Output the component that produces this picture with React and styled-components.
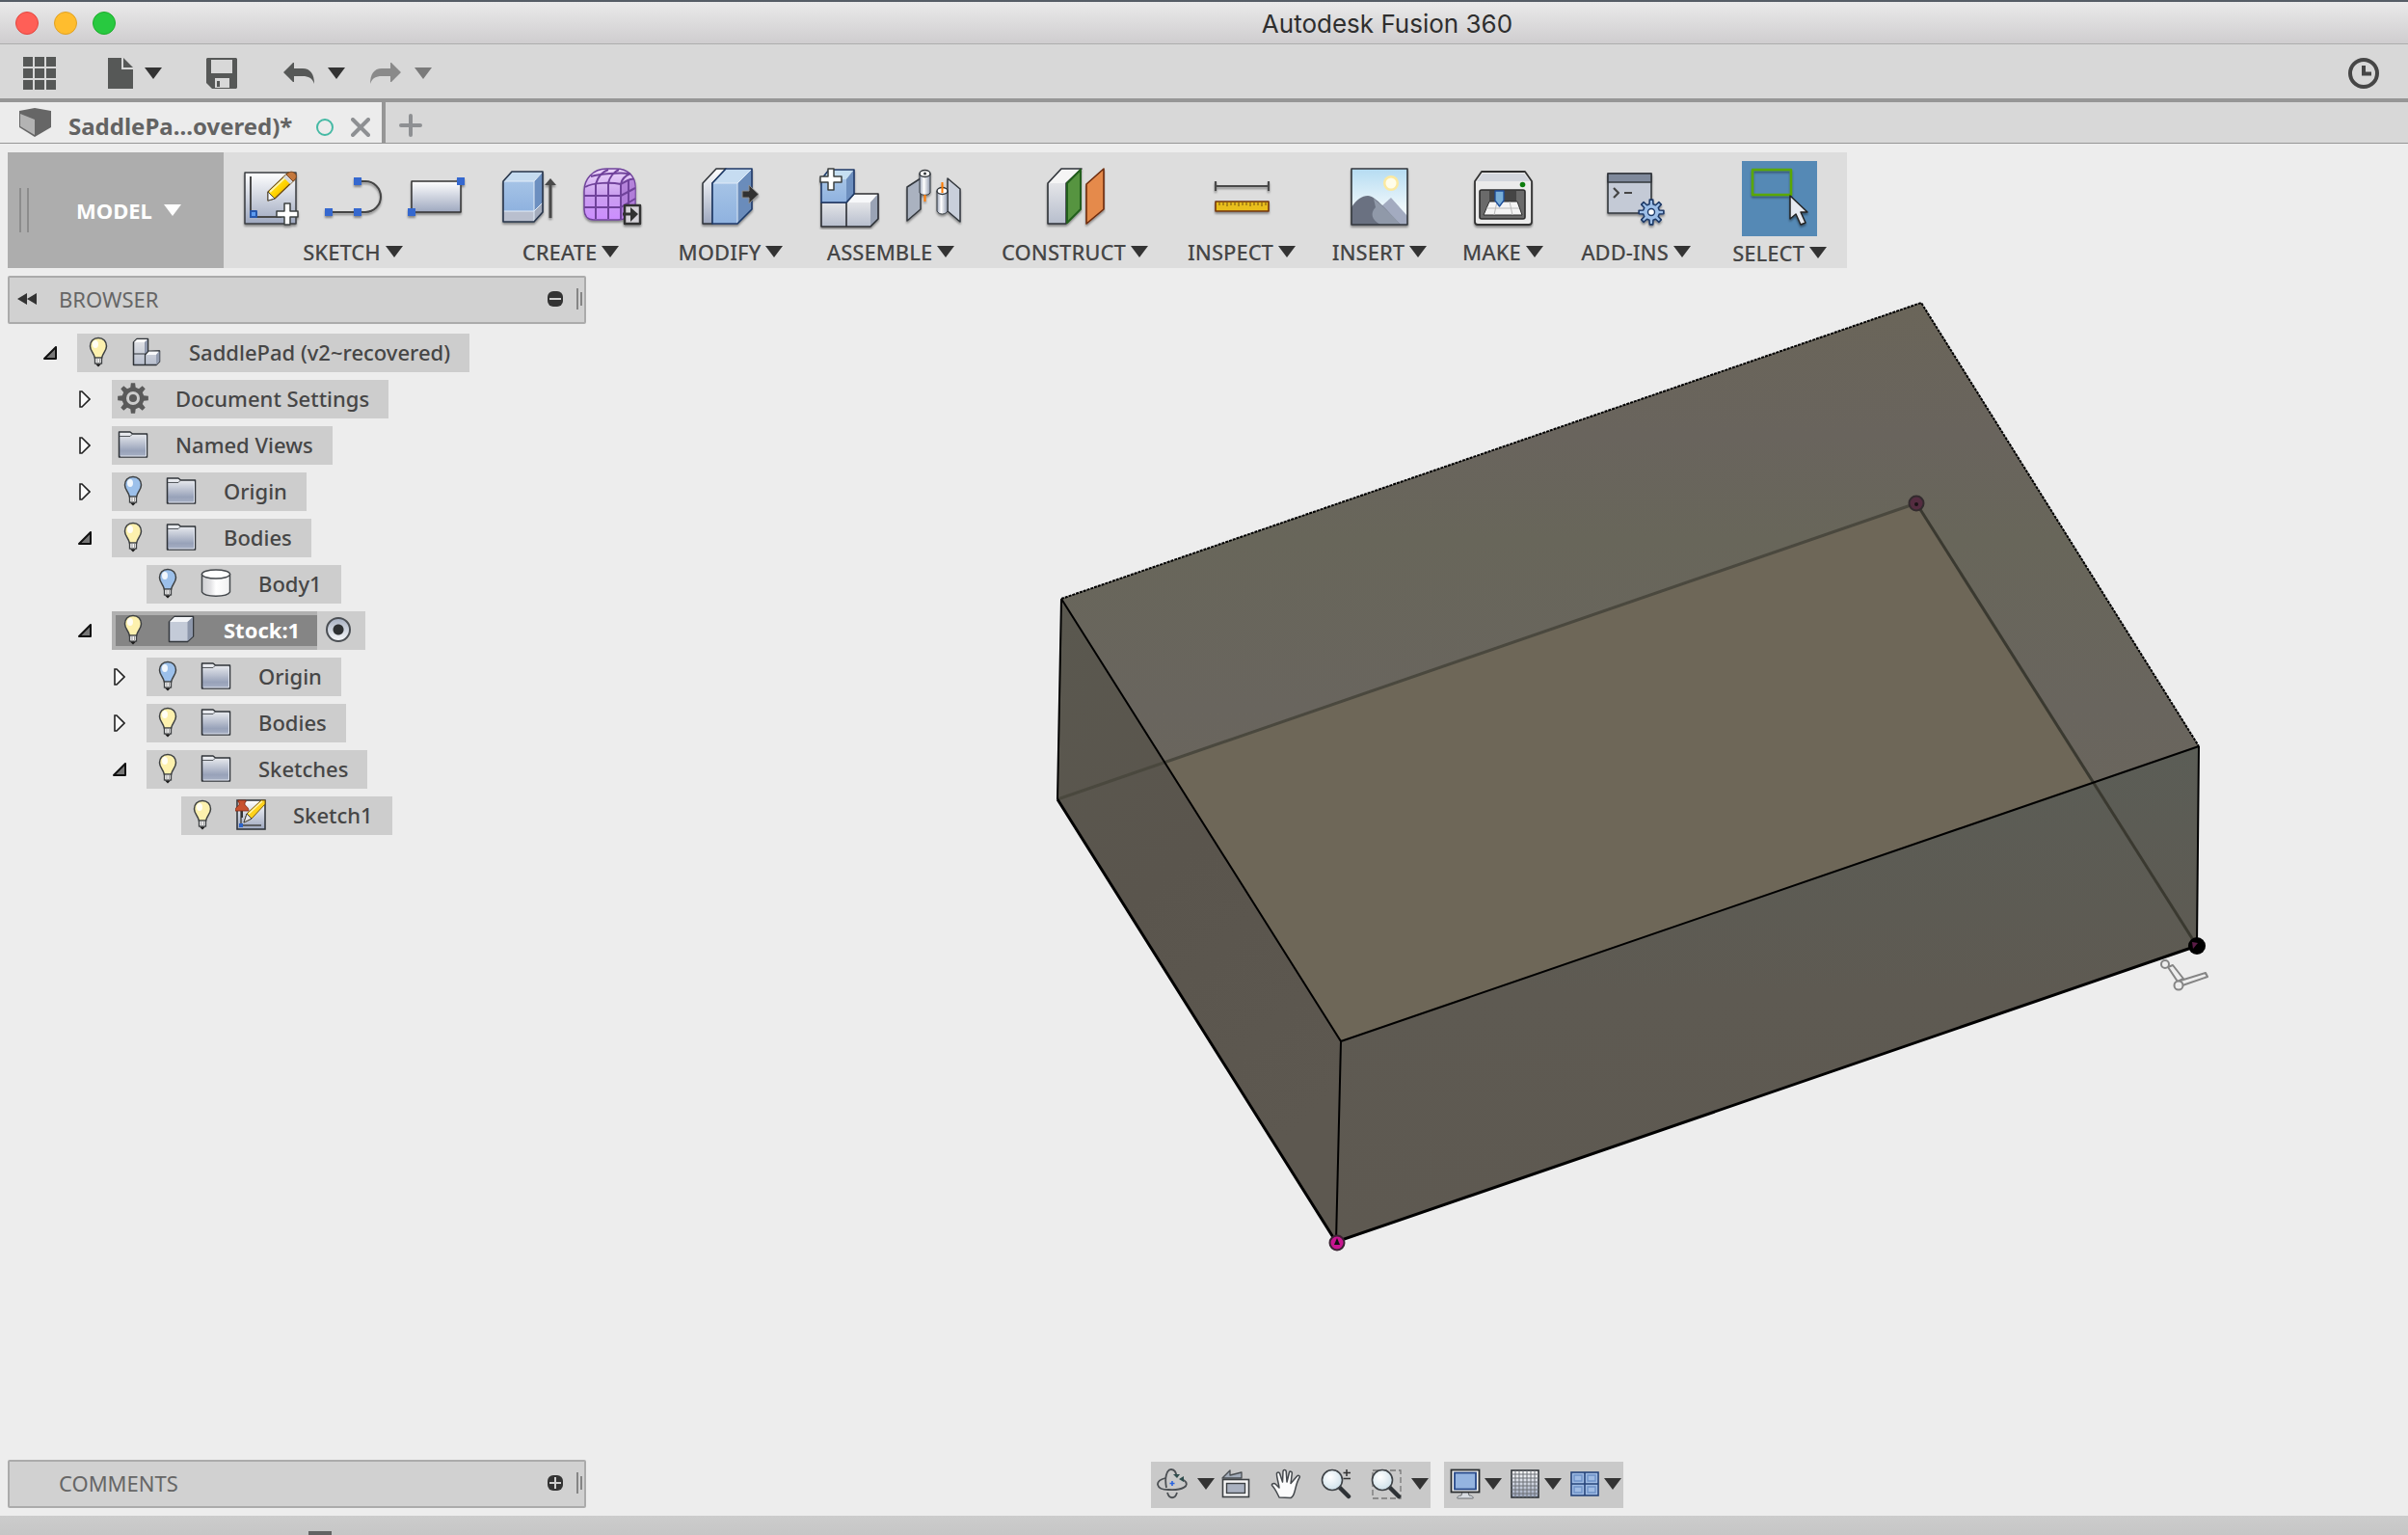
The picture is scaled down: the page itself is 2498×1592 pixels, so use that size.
import React, { useState } from "react";
import styled, { createGlobalStyle, css } from "styled-components";

const GlobalStyle = createGlobalStyle`
  *, *::before, *::after { box-sizing: border-box; }
  html, body { margin: 0; padding: 0; }
  body {
    background: #ededed;
    color: #464646;
    font-family: "Noto Sans", "Open Sans", sans-serif;
    font-size: 22px;
    font-weight: 500;
    line-height: 30px;
  }
  button {
    margin: 0;
    padding: 0;
    border: 0;
    background: none;
    color: inherit;
    font: inherit;
    cursor: pointer;
  }
  ul { margin: 0; padding: 0; list-style: none; }
  svg { display: block; flex: none; }
`;

/* ---------- page frame ---------- */

const Page = styled.div`
  display: flex;
  flex-direction: column;
  min-height: 100vh;
  border-top: 2px solid #565d66;
  overflow: hidden;
`;

const TitleBar = styled.header`
  display: grid;
  grid-template-columns: 380px 1fr;
  align-items: center;
  height: 44px;
  background: linear-gradient(#eaeaea, #cfcdcf);
  border-bottom: 1px solid #adadad;
`;

const Lights = styled.div`
  display: flex;
  gap: 16px;
  padding-left: 16px;
`;

const Light = styled.button`
  width: 24px;
  height: 24px;
  border-radius: 50%;
  background: ${(p) => p.$fill};
  border: 1px solid ${(p) => p.$edge};
`;

const Title = styled.h1`
  margin: 0;
  padding-top: 2px;
  text-align: center;
  font: 400 26px/30px Inter, "Liberation Sans", sans-serif;
  color: #2e2e2e;
`;

const QuickBar = styled.div`
  display: flex;
  align-items: center;
  height: 60px;
  padding: 4px 30px 0 24px;
  background: #d8d8d8;
  border-bottom: 4px solid #969696;
`;

const QuickGroup = styled.div`
  display: flex;
  align-items: center;
  gap: ${(p) => p.$gap || 12}px;
  margin-right: ${(p) => p.$after || 0}px;
  color: ${(p) => (p.$dim ? "#8a8a8a" : "#565857")};
`;

const Spacer = styled.div`
  flex: 1;
`;

const TabStrip = styled.div`
  display: flex;
  height: 43px;
  background: #d8d8d8;
  border-bottom: 1px solid #969696;
`;

const DocTab = styled.div`
  display: flex;
  align-items: center;
  width: 400px;
  padding: 0 12px 0 20px;
  background: #ececec;
  border-right: 4px solid #969696;
`;

const DocName = styled.span`
  flex: 1;
  margin-left: 18px;
  padding-top: 8px;
  font-weight: 700;
  font-size: 24px;
  white-space: nowrap;
  color: #636363;
`;

const DocActions = styled.div`
  display: flex;
  align-items: center;
  gap: 18px;
  padding-top: 10px;
`;

const NewTab = styled.button`
  display: flex;
  align-items: center;
  padding: 6px 14px 0;
`;

/* ---------- work area ---------- */

const Workspace = styled.main`
  position: relative;
  flex: 1;
  display: flex;
  flex-direction: column;
  align-items: flex-start;
  padding: 9px 8px 8px;
`;

const Scene = styled.svg`
  position: absolute;
  left: 1080px;
  top: 151px;
`;

const Ribbon = styled.div`
  display: flex;
  height: 120px;
  background: #dddddd;
`;

const ModeSwitch = styled.div`
  display: flex;
  align-items: center;
  width: 224px;
  background: #adadad;
`;

const Grip = styled.span`
  width: 10px;
  height: 46px;
  margin-left: 12px;
  border: solid #8c8c8c;
  border-width: 0 2px;
`;

const ModeButton = styled.button`
  display: flex;
  align-items: center;
  gap: 12px;
  margin-left: 49px;
  color: #fff;
  font-weight: 700;
`;

const Group = styled.section`
  position: relative;
  display: flex;
  flex-direction: column;
  align-items: center;
  width: ${(p) => p.$width}px;
  padding-top: 9px;

  & + &::before {
    content: "";
    position: absolute;
    left: -1px;
    top: 9px;
    width: 2px;
    height: 102px;
    background: #b4b4b4;
  }
`;

const Tools = styled.div`
  display: flex;
  align-items: center;
  gap: 22px;
  height: 78px;
`;

const Tool = styled.button`
  display: flex;
  align-items: center;
  justify-content: center;
  width: ${(p) => (p.$active ? 78 : 64)}px;
  height: ${(p) => (p.$active ? 78 : 64)}px;
  background: ${(p) => (p.$active ? "#5589b5" : "transparent")};
`;

const GroupMenu = styled.button`
  display: flex;
  align-items: center;
  gap: 5px;
  line-height: 34px;
  white-space: nowrap;
`;

/* ---------- side panels ---------- */

const Panel = styled.section`
  width: 600px;
  ${(p) => p.$top && css`margin-top: 8px;`}
`;

const PanelHead = styled.header`
  display: flex;
  align-items: center;
  height: 50px;
  padding: 0 2px 2px 8px;
  border: 2px solid #ababab;
  border-radius: 2px;
  background: #d1d1d1;
  color: #666;
`;

const Collapse = styled.span`
  display: flex;
  width: 43px;
`;

const PanelTitle = styled.h2`
  flex: 1;
  margin: 0;
  font-size: 22px;
  font-weight: 400;
`;

const PanelGrip = styled.span`
  width: 6px;
  height: 22px;
  margin-left: 14px;
  border-left: 2px solid #858585;
  background: linear-gradient(#858585, #858585) right center / 2px 14px no-repeat;
`;

const Tree = styled.ul`
  display: flex;
  flex-direction: column;
  gap: 8px;
  margin-top: 10px;
`;

const TreeRow = styled.li`
  display: flex;
  align-items: center;
  gap: 14px;
  height: 40px;
  padding-left: ${(p) => 30 + 36 * p.$level}px;
`;

const Twist = styled.button`
  display: flex;
  justify-content: center;
  width: 28px;
`;

const TwistSpace = styled.span`
  width: 28px;
`;

const Node = styled.div`
  display: flex;
  align-items: center;
  height: 40px;
  background: #cdcdcd;
`;

const NodeMain = styled.div`
  display: flex;
  align-items: center;
  gap: 18px;
  height: 40px;
  padding: 0 20px 2px 6px;
  ${(p) =>
    p.$selected &&
    css`
      padding: 0 18px 2px 2px;
      border: 4px solid #b0b0b0;
      border-right-width: 0;
      background: #858585;
      color: #fff;
      font-weight: 700;
    `}
`;

const NodeName = styled.span`
  margin-left: 10px;
  white-space: nowrap;
`;

const ActiveRadio = styled.input`
  appearance: none;
  width: 26px;
  height: 26px;
  margin: 0 15px 2px 9px;
  border: 2px solid #4b4f54;
  border-radius: 50%;
  background: radial-gradient(circle, #2d3033 0 5px, transparent 6px),
    linear-gradient(#a9b2c4, #f4f6f9);
`;

const Dock = styled.div`
  display: flex;
  align-items: flex-end;
  margin-top: auto;
`;

const NavBar = styled.div`
  display: flex;
  align-items: center;
  gap: ${(p) => p.$gap}px;
  height: 48px;
  margin-left: ${(p) => p.$before}px;
  padding: 0 2px 2px 6px;
  background: #c9c9c9;
`;

const NavItem = styled.div`
  display: flex;
  align-items: center;
  gap: ${(p) => p.$gap || 0}px;
  margin-right: ${(p) => p.$pull || 0}px;
`;

const Timeline = styled.footer`
  display: flex;
  align-items: flex-end;
  height: 20px;
  padding-left: 320px;
  background: linear-gradient(#cccccc, #c6c6c6);
`;

const TimelineHandle = styled.span`
  width: 24px;
  height: 4px;
  background: #636363;
`;

/* ---------- drawings ---------- */

const Shared = () => (
  <svg width="0" height="0" style={{ position: "absolute" }} aria-hidden="true">
    <defs>
      <linearGradient id="steel" x1="0" y1="0" x2="0" y2="1">
        <stop offset="0" stopColor="#ffffff" />
        <stop offset="1" stopColor="#9ea8bf" />
      </linearGradient>
      <linearGradient id="pale" x1="0" y1="0" x2="0" y2="1">
        <stop offset="0" stopColor="#e4e5e8" />
        <stop offset="1" stopColor="#b7becd" />
      </linearGradient>
      <linearGradient id="folderFill" x1="0" y1="0" x2="0" y2="1">
        <stop offset="0" stopColor="#f2f3f5" />
        <stop offset="0.75" stopColor="#98a2b9" />
        <stop offset="1" stopColor="#a7b0c4" />
      </linearGradient>
      <linearGradient id="blueFace" x1="0" y1="0" x2="0" y2="1">
        <stop offset="0" stopColor="#a5c3e6" />
        <stop offset="1" stopColor="#8fb2df" />
      </linearGradient>
      <linearGradient id="purpleFace" x1="0" y1="0" x2="0" y2="1">
        <stop offset="0" stopColor="#ecd6fb" />
        <stop offset="0.5" stopColor="#ca9fee" />
        <stop offset="1" stopColor="#cc8dff" />
      </linearGradient>
      <linearGradient id="tube" x1="0" y1="0" x2="1" y2="0">
        <stop offset="0" stopColor="#9aa4b8" />
        <stop offset="0.4" stopColor="#ffffff" />
        <stop offset="1" stopColor="#8f99ad" />
      </linearGradient>
      <linearGradient id="drum" x1="0" y1="0" x2="1" y2="0">
        <stop offset="0" stopColor="#cfd0d3" />
        <stop offset="0.3" stopColor="#e2e2e4" />
        <stop offset="0.5" stopColor="#ffffff" />
        <stop offset="1" stopColor="#f0f0f1" />
      </linearGradient>
      <linearGradient id="sky" x1="0" y1="0" x2="0" y2="1">
        <stop offset="0" stopColor="#b5dcf2" />
        <stop offset="0.7" stopColor="#eef7fb" />
      </linearGradient>
      <linearGradient id="pencilBody" x1="0" y1="0" x2="1" y2="1">
        <stop offset="0" stopColor="#fff27a" />
        <stop offset="0.5" stopColor="#ffd400" />
        <stop offset="1" stopColor="#e08a00" />
      </linearGradient>
      <radialGradient id="lens" cx="0.4" cy="0.35" r="0.8">
        <stop offset="0" stopColor="#ffffff" />
        <stop offset="1" stopColor="#c5dbe6" />
      </radialGradient>
      <linearGradient id="topFace" x1="0" y1="0" x2="0" y2="1">
        <stop offset="0" stopColor="#6a6559" />
        <stop offset="0.18" stopColor="#69645d" />
        <stop offset="0.32" stopColor="#68665a" />
        <stop offset="0.55" stopColor="#69655e" />
        <stop offset="1" stopColor="#6c6659" />
      </linearGradient>
      <linearGradient id="frontFace" x1="0" y1="0" x2="0" y2="1">
        <stop offset="0" stopColor="#5b5d56" />
        <stop offset="0.5" stopColor="#5e5a52" />
        <stop offset="1" stopColor="#5e5951" />
      </linearGradient>
      <linearGradient id="leftFace" x1="0" y1="0" x2="0.4" y2="1">
        <stop offset="0" stopColor="#5a584f" />
        <stop offset="0.5" stopColor="#5a554d" />
        <stop offset="1" stopColor="#5d5850" />
      </linearGradient>
      <filter id="soft" x="-10%" y="-10%" width="125%" height="130%">
        <feDropShadow dx="0" dy="2" stdDeviation="1.2" floodOpacity="0.4" />
      </filter>
    </defs>
  </svg>
);

const Caret = ({ color = "#333333" }) => (
  <svg width="18" height="12" viewBox="0 0 18 12" aria-hidden="true">
    <path d="M0 0H18L9 12Z" fill={color} />
  </svg>
);

const Big = ({ children, size = 64 }) => (
  <svg width={size} height={size} viewBox={`0 0 ${size} ${size}`} aria-hidden="true">
    <g filter="url(#soft)" strokeLinejoin="round">{children}</g>
  </svg>
);

const Small = ({ children }) => (
  <svg width="32" height="32" viewBox="0 0 32 32" aria-hidden="true">
    {children}
  </svg>
);

const Plus = ({ x, y }) => (
  <path
    transform={`translate(${x} ${y})`}
    d="M-3-11H3V-3H11V3H3V11H-3V3H-11V-3H-3Z"
    fill="#fff"
    stroke="#3c4040"
    strokeWidth="1.5"
  />
);

const Handle = ({ x, y }) => (
  <rect x={x - 4} y={y - 4} width="8" height="8" fill="#3468cf" />
);

const NewSketchIcon = () => (
  <Big>
    <rect x="6" y="5" width="53" height="53" fill="url(#steel)" stroke="#3a3d40" strokeWidth="1.5" />
    <path d="M12 9V51H44" fill="none" stroke="#4a4a4a" strokeWidth="2" />
    <rect x="12" y="45" width="6" height="6" fill="#5b9bf0" stroke="#2558ad" strokeWidth="2" />
    <path d="M30 25 51 5 58 12 37 32 30 34Z" fill="url(#pencilBody)" stroke="#6b4a12" strokeWidth="1.3" />
    <path d="M30 25 37 32 30 34Z" fill="#fff" stroke="#444" strokeWidth="1" />
    <path d="M32 25 50 8" stroke="#fff6a8" strokeWidth="2" />
    <path d="M46 10 53 17 56 14 49 7Z" fill="#d5d8dc" />
    <path d="M49 7 56 14C60 11 60 8 58 6 55 3 52 4 49 7Z" fill="#c4783c" stroke="#7b4620" />
    <Plus x={50} y={48} />
  </Big>
);

const LineIcon = () => (
  <Big>
    <path d="M7 46H45A16 16 0 0 0 45 14H37" fill="none" stroke="#444" strokeWidth="2" />
    <Handle x={7} y={46} />
    <Handle x={37} y={46} />
    <Handle x={37} y={14} />
  </Big>
);

const RectIcon = () => (
  <Big>
    <rect x="7" y="14" width="51" height="32" fill="url(#steel)" stroke="#333" strokeWidth="1.5" />
    <Handle x={58} y={14} />
    <Handle x={7} y={46} />
  </Big>
);

const ExtrudeIcon = () => (
  <Big>
    <path d="M5 14 14 4H46L37 14Z" fill="#c5dbf0" />
    <path d="M5 14H37V45H5Z" fill="url(#blueFace)" />
    <path d="M37 14 46 4V36L37 45Z" fill="#6c8fc0" />
    <path d="M5 45H37V56H5Z" fill="#b9bfce" />
    <path d="M37 45 46 36V46L37 56Z" fill="#a3abbc" />
    <path d="M5 45H37L46 36M5 14H37V56M37 14 46 4" fill="none" stroke="#e3edf8" strokeWidth="1" />
    <path d="M5 14 14 4H46V46L37 56H5Z" fill="none" stroke="#27344a" strokeWidth="1.6" />
    <path d="M54 52V16" stroke="#484848" strokeWidth="3" />
    <path d="M48 18 54 11 60 18Z" fill="#484848" />
  </Big>
);

const FormIcon = () => (
  <Big>
    <path
      d="M3 24C3 12 12 1 26 1H36C48 1 56 8 56 20V38C56 48 46 54 38 54H13C6 54 3 49 3 43Z"
      fill="url(#purpleFace)"
      stroke="#70439b"
      strokeWidth="1.5"
    />
    <path d="M41 17C47 12 52 10 54 12 57 18 56 32 55 40L41 53Z" fill="#a873d2" opacity="0.75" />
    <g fill="none" stroke="#70439b" strokeWidth="2">
      <path d="M4 20C12 15 32 15 41 17 46 14 52 11 54 12" />
      <path d="M10 9C20 6 40 5 50 6" />
      <path d="M3 29H41L56 21" />
      <path d="M3 41H41L56 32" />
      <path d="M15 53V17C17 10 22 4 28 2" />
      <path d="M28 53V16C29 10 34 4 39 2" />
      <path d="M41 53V17C42 12 46 8 51 6" />
      <path d="M49 46V12" />
    </g>
    <rect x="45" y="39" width="16" height="19" fill="#d6d3d9" stroke="#333" strokeWidth="2.5" />
    <path d="M43 48H52" stroke="#333" strokeWidth="3" />
    <path d="M51 41 59 48 51 56Z" fill="#333" />
  </Big>
);

const PressPullIcon = () => (
  <Big>
    <path d="M3 16 17 1H27L13 16V58H3Z" fill="url(#steel)" stroke="#2f3338" strokeWidth="1.5" />
    <path d="M13 16 27 1H54L39 16Z" fill="#c6dcf1" />
    <path d="M13 16H39V58H13Z" fill="url(#blueFace)" />
    <path d="M39 16 54 1V43L39 58Z" fill="#6b8cbb" />
    <path d="M13 16H39V58M39 16 54 1" fill="none" stroke="#dfeaf7" />
    <path d="M13 16 27 1H54V43L39 58H13Z" fill="none" stroke="#1f3a68" strokeWidth="1.6" />
    <path d="M44 24H51V18L61 27.500 51 37V31H44Z" fill="#333" stroke="#8d8d8d" strokeWidth="1" />
  </Big>
);

const ComponentIcon = () => (
  <Big>
    <path d="M3 36H29V61H3ZM29 36H54V61H29Z" fill="url(#pale)" />
    <path d="M29 36 37 27H62L54 36Z" fill="#f7f8fa" />
    <path d="M54 36 62 27V53L54 61Z" fill="#9aa3b5" />
    <path d="M3 36V61H54L62 53V27H37L29 36V61M3 36H29" fill="none" stroke="#2b2e33" strokeWidth="1.6" />
    <path d="M3 12 11 2H37L29 12Z" fill="#c6dff2" />
    <path d="M3 12H29V36H3Z" fill="url(#blueFace)" />
    <path d="M29 12 37 2V27L29 36Z" fill="#6d8fbf" />
    <path d="M3 12 11 2H37V27L29 36H3Z" fill="none" stroke="#1f3a68" strokeWidth="1.6" />
    <Plus x={13} y={12} />
  </Big>
);

const JointIcon = () => (
  <Big>
    <path d="M6 20 20 11V43L6 55Z" fill="#aab2c0" stroke="#33373c" strokeWidth="1.5" />
    <path d="M19 6V26C21 29 28 29 30 26V6Z" fill="url(#tube)" stroke="#33373c" />
    <ellipse cx="24.500" cy="6" rx="5.500" ry="3.500" fill="#fff" stroke="#33373c" strokeWidth="1.5" />
    <circle cx="24.500" cy="6" r="1.500" fill="#33373c" />
    <path d="M24.500 28V35" stroke="#ff7a00" strokeWidth="2" />
    <path d="M48 11 61 22V56L48 45Z" fill="#c9cfdb" stroke="#33373c" strokeWidth="1.5" />
    <path d="M37 24V45C39 49 46 49 48 45V24Z" fill="url(#tube)" stroke="#33373c" />
    <ellipse cx="42.500" cy="24" rx="5.500" ry="3.500" fill="#fff" stroke="#33373c" strokeWidth="1.5" />
    <path d="M42.500 15V26" stroke="#ff7a00" strokeWidth="2" />
  </Big>
);

const PlaneIcon = () => (
  <Big>
    <path d="M4 16 18 1H39L23 16Z" fill="#f5f5f5" />
    <path d="M4 16H23V58H4Z" fill="url(#pale)" />
    <path d="M4 16 18 1H39L23 16V58H4Z" fill="none" stroke="#2f3338" strokeWidth="1.6" />
    <path d="M24 16 38 2V43L24 57Z" fill="#569440" stroke="#235f1c" strokeWidth="2" />
    <path d="M44 17 62 1V43L44 58Z" fill="#e58a4c" stroke="#6e2c0d" strokeWidth="1.6" />
  </Big>
);

const MeasureIcon = () => (
  <Big>
    <path d="M4.500 19H60M5 14V24M60 14V24" stroke="#484848" strokeWidth="2.200" />
    <rect x="5" y="35" width="55" height="10" fill="#e9be1b" stroke="#73360d" strokeWidth="1.600" />
    <path d="M9 36V39M13 36V39M17 36V40M21 36V39M25 36V39M29 36V40M33 36V39M37 36V39M41 36V40M45 36V39M49 36V39M53 36V40M57 36V39" stroke="#73510d" />
  </Big>
);

const PictureIcon = () => (
  <Big>
    <rect x="3" y="1" width="58" height="58" fill="url(#sky)" />
    <circle cx="44" cy="16" r="8" fill="#fbe9a0" />
    <circle cx="44" cy="16" r="5.500" fill="#fffdea" />
    <path d="M30 59 34 40 44 31 61 50V59Z" fill="#a3abc0" />
    <path d="M3 41C8 33 14 29 20 29 28 29 40 45 54 59H3Z" fill="#6a7181" />
    <path d="M26 32C36 40 46 50 54 59H33C24 54 22 47 28 41Z" fill="#9099a9" />
    <rect x="3" y="1" width="58" height="58" fill="none" stroke="#33373c" strokeWidth="1.6" />
  </Big>
);

const PrinterIcon = () => (
  <Big>
    <path d="M3 14 10 4H55L62 14V56C62 58 61 59 59 59H6C4 59 3 58 3 56Z" fill="#ebebeb" stroke="#333" strokeWidth="1.8" />
    <path d="M5 14 11 6H54L60 14Z" fill="#d3d6dd" />
    <circle cx="52.500" cy="17.500" r="2.800" fill="#0e7d10" />
    <rect x="8" y="23" width="47" height="30" rx="2" fill="#6b6b6b" stroke="#2d2d2d" strokeWidth="1.6" />
    <path d="M18 24H46V35H18Z" fill="#454545" />
    <path d="M18 35H47L52 49H12Z" fill="#f4f4f4" stroke="#2d2d2d" />
    <path d="M15 42H49M26 35 23 49M39 35 42 49" stroke="#b9b9b9" />
    <path d="M24 24H33V34L28.500 40 24 34Z" fill="#79afd8" stroke="#1f4f9c" strokeWidth="1.3" />
  </Big>
);

const gearPath = (cx, cy, outer, inner, teeth) => {
  const points = [];
  const step = (Math.PI * 2) / teeth;
  for (let i = 0; i < teeth; i += 1) {
    [[-0.3, inner], [-0.17, outer], [0.17, outer], [0.3, inner]].forEach(([offset, radius]) => {
      const angle = (i + offset) * step;
      points.push(`${(cx + Math.sin(angle) * radius).toFixed(2)} ${(cy - Math.cos(angle) * radius).toFixed(2)}`);
    });
  }
  return `M${points.join("L")}Z`;
};

const ScriptIcon = () => (
  <Big>
    <rect x="3" y="6" width="45" height="41" fill="#c4cad6" stroke="#33373c" strokeWidth="1.6" />
    <rect x="3" y="6" width="45" height="9" fill="#7f899b" stroke="#33373c" strokeWidth="1.6" />
    <path d="M9 21 14 26 9 31M20 26H28" fill="none" stroke="#444" strokeWidth="2.200" />
    <path d={gearPath(48, 46, 13, 8.5, 8)} fill="#9dbfe8" stroke="#1f3a68" strokeWidth="1.6" />
    <circle cx="48" cy="46" r="3.500" fill="#fff" stroke="#1f3a68" strokeWidth="1.4" />
  </Big>
);

const SelectIcon = () => (
  <Big size={78}>
    <rect x="11" y="9" width="40" height="26" fill="none" stroke="#5aa700" strokeWidth="2.500" />
    <path d="M50 36V60L56 55 61 66 66 64 61 53H68Z" fill="#e6e9f0" stroke="#222" strokeWidth="1.5" />
  </Big>
);

const BulbIcon = ({ on }) => (
  <Small>
    <path
      d="M16 1.500C10.500 1.500 7.500 5.500 7.500 10 7.500 15 11.500 17 12.500 22.500H19.500C20.500 17 24.500 15 24.500 10 24.500 5.500 21.500 1.500 16 1.500Z"
      fill={on ? "#fdf1ae" : "#9cc0ea"}
      stroke="#3d4042"
      strokeWidth="1.5"
    />
    <ellipse cx="13" cy="8" rx="3" ry="4" fill="#fff" opacity="0.85" />
    <rect x="12.500" y="22" width="7" height="6" fill="#f4f4f4" stroke="#3d4042" strokeWidth="1.3" />
    <path d="M15 23V28M17.500 23V28" stroke="#999" />
    <path d="M13 28.500H19L16 31.500Z" fill="#1c1c1c" />
  </Small>
);

const FolderIcon = () => (
  <Small>
    <path d="M1.500 29V3H13L15.500 5H30.500V29Z" fill="url(#folderFill)" stroke="#2f3338" strokeWidth="1.5" strokeLinejoin="round" />
    <path d="M2 7.500H13L15.500 5" fill="none" stroke="#55595e" />
    <path d="M3 28H29.500V6.500" fill="none" stroke="#dfe4ee" strokeWidth="1" />
  </Small>
);

const AssemblyIcon = () => (
  <Small>
    <path d="M2.500 6 6 2.500H17.500V16L29.500 15V26L26 29.500H2.500Z" fill="url(#pale)" stroke="#2f3338" strokeWidth="1.500" strokeLinejoin="round" />
    <path d="M3 6 6 3H17L14 6Z" fill="#fafafa" />
    <path d="M14 6 17 3V17L14 20Z" fill="#8f98ac" />
    <path d="M14.500 19 18 15H29L26 19Z" fill="#f7f8fa" />
    <path d="M26 19 29.500 15V26L26 29.500Z" fill="#949db0" />
    <path d="M14.500 29V19L18 15H29.500M3 18H14.500" fill="none" stroke="#2f3338" strokeWidth="1.2" />
  </Small>
);

const GearIcon = () => (
  <Small>
    <path d={gearPath(16, 16, 16, 11.5, 8)} fill="#5a5a5a" />
    <circle cx="16" cy="16" r="7" fill="#cdcdcd" />
    <circle cx="16" cy="16" r="4" fill="#5a5a5a" />
  </Small>
);

const CylinderIcon = () => (
  <Small>
    <path d="M1.500 6V25C4 30.500 28 30.500 30.500 25V6" fill="url(#drum)" stroke="#44484c" strokeWidth="1.5" />
    <ellipse cx="16" cy="6.500" rx="14.500" ry="4.500" fill="#fff" stroke="#44484c" strokeWidth="1.5" />
  </Small>
);

const CubeIcon = () => (
  <Small>
    <path d="M3.500 8 9 2.500H28.500V23L22.500 28.500H3.500Z" fill="#c4cbd8" stroke="#33373c" strokeWidth="1.5" strokeLinejoin="round" />
    <path d="M4 8 9 3H28L22.500 8Z" fill="#f3f5f8" />
    <path d="M22.500 8 28 3V23L22.500 28Z" fill="#8d97ab" />
  </Small>
);

const SketchItemIcon = () => (
  <Small>
    <rect x="2" y="1" width="29" height="30" fill="url(#steel)" stroke="#33373c" strokeWidth="1.6" />
    <path d="M6 10V27H27" fill="none" stroke="#444" strokeWidth="1.4" />
    <rect x="4" y="25" width="4" height="4" fill="#2b63c9" />
    <path d="M9 24 12 15 27 1H31V5L17 20Z" fill="#ffd21c" stroke="#7b5a12" strokeWidth="1" />
    <path d="M9 24 12 15 17 20Z" fill="#e6e6e6" stroke="#444" strokeWidth="1" />
    <path d="M14 15 28 2" stroke="#fff6b0" strokeWidth="1.5" />
    <path d="M7 12V19" stroke="#333" strokeWidth="2" />
    <path d="M3 1H11V3H10V6C13 8 14 10 14 12H0C0 10 1 8 4 6V3H3Z" fill="#c8512f" stroke="#7d2a14" strokeWidth="0.800" />
  </Small>
);

const OrbitIcon = () => (
  <Small>
    <g fill="none" stroke="#4b4f53" strokeWidth="1.8">
      <path d="M10 20C8 10 10 1 15 1 18 1 20 4 20.500 8" />
      <path d="M9 10C-3 13-1 22 12 22 26 23 36 18 28 12" />
      <path d="M11 25C13 32 19 32 21 25" />
    </g>
    <path d="M16 13V18M13.500 15.500H18.500" stroke="#2a64df" strokeWidth="1.6" />
    <path d="M17 6H24L21 10ZM23 11 28 8V14Z" fill="#2f4d4d" />
  </Small>
);

const LookIcon = () => (
  <Small>
    <path d="M2 10 10 2V7L22 4V10Z" fill="#a3acb9" stroke="#4b4f53" strokeWidth="1.3" strokeLinejoin="round" />
    <rect x="2.500" y="11.500" width="27" height="18" fill="#f7f7f7" stroke="#3d4144" strokeWidth="1.6" />
    <rect x="6.500" y="15.500" width="19" height="10" fill="#aab2c1" stroke="#3d4144" strokeWidth="1.4" />
  </Small>
);

const HandIcon = () => (
  <Small>
    <path
      d="M9 30C7 26 5 21 1.500 17.500 1 15.500 4 15 5.500 16.500L9 20C8.500 15 6 8 6.500 5 7 3.500 9 3.500 9.500 5L12.500 14 13 3C13.200 1 16 1 16.200 3L17 14 19.500 4C20 2.500 22.500 3 22.300 5L21 15.500 27.500 8C29 6.500 31 8 30 9.500 27 14 26 21 25 24 24 28 22 30 21 30.500Z"
      fill="#fbfbfb"
      stroke="#45494d"
      strokeWidth="1.5"
      strokeLinejoin="round"
    />
  </Small>
);

const Lens = () => (
  <>
    <path d="M20 20 29 29" stroke="#2e3236" strokeWidth="4.500" strokeLinecap="round" />
    <circle cx="12" cy="12" r="10.500" fill="url(#lens)" stroke="#3f4347" strokeWidth="1.6" />
  </>
);

const ZoomIcon = () => (
  <Small>
    <Lens />
    <path d="M27 1V8M23.500 4.500H31M23.500 10.500H31" stroke="#333" strokeWidth="1.5" />
  </Small>
);

const ZoomWindowIcon = () => (
  <Small>
    <rect x="2" y="2" width="29" height="29" fill="none" stroke="#777" strokeWidth="1.3" strokeDasharray="6 3" />
    <Lens />
  </Small>
);

const DisplayIcon = () => (
  <Small>
    <path d="M13 24H19L20 28C24 28 25 31 24 31H8C7 31 8 28 12 28Z" fill="#d8dce2" stroke="#6a6e73" />
    <rect x="1.500" y="1.500" width="29" height="23" fill="#f6f6f2" stroke="#2b2e31" strokeWidth="1.8" />
    <rect x="5" y="4.500" width="22" height="17" fill="#94b4e0" stroke="#27498a" strokeWidth="1.8" />
  </Small>
);

const GridIcon = () => (
  <Small>
    <rect x="2" y="2" width="28" height="28" fill="url(#steel)" stroke="#2f3338" strokeWidth="1.6" />
    <path
      d="M6 2V30M10 2V30M14 2V30M18 2V30M22 2V30M26 2V30M2 6H30M2 10H30M2 14H30M2 18H30M2 22H30M2 26H30"
      stroke="#6d7176"
      strokeWidth="1"
    />
  </Small>
);

const ViewsIcon = () => (
  <Small>
    <rect x="2" y="4" width="28" height="24" fill="#9fbbe3" stroke="#27457a" strokeWidth="1.6" />
    <path d="M16 4V28M2 16H30" stroke="#27457a" strokeWidth="1.6" />
    <path d="M5 7H13V13H5ZM19 7H27V13H19ZM5 19H13V25H5ZM19 19H27V25H19Z" fill="none" stroke="#6f93c8" strokeWidth="1.4" />
  </Small>
);

const AppGridIcon = () => (
  <svg width="34" height="34" viewBox="0 0 34 34" fill="currentColor" aria-hidden="true">
    {[0, 12, 24].map((y) => [0, 12, 24].map((x) => <rect key={`${x}-${y}`} x={x} y={y} width="10" height="10" />))}
  </svg>
);

const FileIcon = () => (
  <svg width="26" height="32" viewBox="0 0 26 32" fill="currentColor" aria-hidden="true">
    <path d="M0 0H14V12H26V32H0Z" />
    <path d="M16 0 26 10H16Z" />
  </svg>
);

const SaveIcon = () => (
  <svg width="32" height="32" viewBox="0 0 32 32" aria-hidden="true">
    <path d="M1 0H31L32 1V31L31 32H6L0 26V1Z" fill="currentColor" />
    <path d="M5 2H27V16H5ZM9 21H24V31H9Z" fill="#d8d8d8" />
    <path d="M11 24H14V30H11Z" fill="currentColor" />
  </svg>
);

const UndoIcon = ({ flip }) => (
  <svg width="32" height="22" viewBox="0 0 32 22" fill="currentColor" aria-hidden="true">
    <path transform={flip ? "matrix(-1 0 0 1 32 0)" : undefined} d="M0 10 10 0H11V6H20C28 6 32 12 32 22 30 16 26 14 20 14H11V20H10Z" />
  </svg>
);

const ClockIcon = () => (
  <svg width="32" height="32" viewBox="0 0 32 32" fill="none" stroke="#464646" aria-hidden="true">
    <circle cx="16" cy="16" r="14" strokeWidth="4" />
    <path d="M16 8V16.500H24" strokeWidth="4" />
  </svg>
);

const DocCubeIcon = () => (
  <svg width="33" height="30" viewBox="0 0 33 30" aria-hidden="true">
    <path d="M0 3 16 0 33 3V20L16 30 0 20Z" fill="#666" />
    <path d="M1 6 16 12V28L1 19Z" fill="#b3b3b3" />
  </svg>
);

const RewindIcon = () => (
  <svg width="20" height="12" viewBox="0 0 20 12" fill="#333" aria-hidden="true">
    <path d="M10 0V12L0 6ZM20 0V12L10 6Z" />
  </svg>
);

const RoundIcon = ({ plus }) => (
  <svg width="16" height="16" viewBox="0 0 16 16" aria-hidden="true">
    <rect width="16" height="16" rx="6" fill="#333" />
    <path d={plus ? "M2 8H14M8 2V14" : "M2 8H14"} stroke="#cfcfcf" strokeWidth="2" />
  </svg>
);

const TwistIcon = ({ open }) =>
  open ? (
    <svg width="14" height="14" viewBox="0 0 14 14" aria-hidden="true">
      <path d="M13 1V13H1Z" fill="#777" stroke="#111" strokeWidth="2" strokeLinejoin="round" />
    </svg>
  ) : (
    <svg width="12" height="18" viewBox="0 0 12 18" aria-hidden="true">
      <path d="M1 1H3L11 9 3 17H1Z" fill="#fafafa" stroke="#222" strokeWidth="1.6" />
    </svg>
  );

const Model = () => (
  <Scene width="1220" height="1010" viewBox="1080 300 1220 1010" role="img" aria-label="Stock body">
    <path d="M1993 314 2281 774 1391 1080 1101 621Z" fill="url(#topFace)" />
    <path d="M1391 1080 2281 774 2279 981 1386 1288Z" fill="url(#frontFace)" />
    <path d="M1101 621 1391 1080 1386 1288 1097 829Z" fill="url(#leftFace)" />
    <path d="M1988 522 2170 812 1391 1080 1209 791Z" fill="#6e6758" />
    <path d="M1097 829 1988 522" fill="none" stroke="#4a483e" strokeWidth="3" />
    <path d="M1988 522 2279 981" fill="none" stroke="#3a3930" strokeWidth="3" />
    <path d="M1101 621 1993 314 2281 774" fill="none" stroke="#000" strokeWidth="2" strokeDasharray="3 1" />
    <path d="M1101 621 1391 1080 2281 774M1101 621 1097 829M1391 1080 1386 1288M2281 774 2279 981" fill="none" stroke="#000" strokeWidth="2" />
    <path d="M1097 829 1386 1288 2279 981" fill="none" stroke="#000" strokeWidth="3" />
    <circle cx="1988" cy="522" r="7.500" fill="#542c40" stroke="#332b2e" strokeWidth="2" />
    <circle cx="1988" cy="523" r="2" fill="#1a1416" />
    <circle cx="2279" cy="981" r="9" fill="#000" />
    <path d="M2274 977 2280 978 2275 984Z" fill="#5b1c47" />
    <circle cx="1387" cy="1289" r="7.500" fill="#c81590" stroke="#3c2334" strokeWidth="2" />
    <path d="M1387 1284 1390 1291H1384Z" fill="#111" />
    <g fill="#ededed" stroke="#858585" strokeWidth="2" strokeLinejoin="round">
      <path d="M2249 1003 2254 1001 2265 1015 2259 1018Z" />
      <path d="M2262 1017 2288 1009 2290 1013 2264 1022Z" />
      <circle cx="2246" cy="1000" r="4" />
      <circle cx="2260" cy="1022" r="4.500" />
    </g>
  </Scene>
);

/* ---------- data ---------- */

const ribbonGroups = [
  { name: "SKETCH", width: 268, tools: [["Create Sketch", NewSketchIcon], ["Line", LineIcon], ["Rectangle", RectIcon]] },
  { name: "CREATE", width: 184, tools: [["Extrude", ExtrudeIcon], ["Create Form", FormIcon]] },
  { name: "MODIFY", width: 148, tools: [["Press Pull", PressPullIcon]] },
  { name: "ASSEMBLE", width: 184, tools: [["New Component", ComponentIcon], ["Joint", JointIcon]] },
  { name: "CONSTRUCT", width: 198, tools: [["Offset Plane", PlaneIcon]] },
  { name: "INSPECT", width: 148, tools: [["Measure", MeasureIcon]] },
  { name: "INSERT", width: 138, tools: [["Attached Canvas", PictureIcon]] },
  { name: "MAKE", width: 118, tools: [["3D Print", PrinterIcon]] },
  { name: "ADD-INS", width: 158, tools: [["Scripts and Add-Ins", ScriptIcon]] },
  { name: "SELECT", width: 140, tools: [["Select", SelectIcon]], active: true },
];

const treeItems = [
  { id: "root", level: 0, open: true, bulb: "on", icon: AssemblyIcon, name: "SaddlePad (v2~recovered)" },
  { id: "settings", level: 1, open: false, icon: GearIcon, name: "Document Settings" },
  { id: "views", level: 1, open: false, icon: FolderIcon, name: "Named Views" },
  { id: "origin", level: 1, open: false, bulb: "off", icon: FolderIcon, name: "Origin" },
  { id: "bodies", level: 1, open: true, bulb: "on", icon: FolderIcon, name: "Bodies" },
  { id: "body1", level: 2, bulb: "off", icon: CylinderIcon, name: "Body1" },
  { id: "stock", level: 1, open: true, bulb: "on", icon: CubeIcon, name: "Stock:1", selected: true },
  { id: "stock-origin", level: 2, open: false, bulb: "off", icon: FolderIcon, name: "Origin" },
  { id: "stock-bodies", level: 2, open: false, bulb: "on", icon: FolderIcon, name: "Bodies" },
  { id: "sketches", level: 2, open: true, bulb: "on", icon: FolderIcon, name: "Sketches" },
  { id: "sketch1", level: 3, bulb: "on", icon: SketchItemIcon, name: "Sketch1" },
];

function TreeItem({ item, lit, onToggleLight }) {
  const Icon = item.icon;
  return (
    <TreeRow $level={item.level}>
      {item.open === undefined ? (
        <TwistSpace />
      ) : (
        <Twist aria-label={`Expand ${item.name}`} aria-expanded={item.open}>
          <TwistIcon open={item.open} />
        </Twist>
      )}
      <Node>
        <NodeMain $selected={item.selected}>
          {item.bulb && (
            <button aria-label={`Show ${item.name}`} aria-pressed={lit} onClick={onToggleLight}>
              <BulbIcon on={lit} />
            </button>
          )}
          <Icon />
          <NodeName>{item.name}</NodeName>
        </NodeMain>
        {item.selected && (
          <ActiveRadio type="radio" name="active-component" defaultChecked aria-label={`Activate ${item.name}`} />
        )}
      </Node>
    </TreeRow>
  );
}

export default function App() {
  const [lights, setLights] = useState(() =>
    Object.fromEntries(treeItems.map((item) => [item.id, item.bulb === "on"]))
  );
  const toggle = (id) => setLights((current) => ({ ...current, [id]: !current[id] }));

  return (
    <Page>
      <GlobalStyle />
      <Shared />
      <TitleBar>
        <Lights>
          <Light $fill="#ff5f57" $edge="#e2463f" aria-label="Close window" />
          <Light $fill="#ffbd2e" $edge="#e0a123" aria-label="Minimize window" />
          <Light $fill="#28c940" $edge="#1dad2b" aria-label="Zoom window" />
        </Lights>
        <Title>Autodesk Fusion 360</Title>
      </TitleBar>

      <QuickBar>
        <QuickGroup $after={54}>
          <button aria-label="Data panel"><AppGridIcon /></button>
        </QuickGroup>
        <QuickGroup $after={46}>
          <button aria-label="File"><FileIcon /></button>
          <button aria-label="File menu"><Caret /></button>
        </QuickGroup>
        <QuickGroup $after={48}>
          <button aria-label="Save"><SaveIcon /></button>
        </QuickGroup>
        <QuickGroup $gap={14} $after={26}>
          <button aria-label="Undo"><UndoIcon /></button>
          <button aria-label="Undo history"><Caret /></button>
        </QuickGroup>
        <QuickGroup $gap={14} $dim>
          <button aria-label="Redo"><UndoIcon flip /></button>
          <button aria-label="Redo history"><Caret color="#7a7a7a" /></button>
        </QuickGroup>
        <Spacer />
        <button aria-label="Job status"><ClockIcon /></button>
      </QuickBar>

      <TabStrip>
        <DocTab>
          <DocCubeIcon />
          <DocName>SaddlePa...overed)*</DocName>
          <DocActions>
            <svg width="18" height="18" viewBox="0 0 18 18" aria-hidden="true">
              <circle cx="9" cy="9" r="8" fill="none" stroke="#45b9a4" strokeWidth="2" />
            </svg>
            <button aria-label="Close document">
              <svg width="20" height="20" viewBox="0 0 20 20" aria-hidden="true">
                <path d="M2 2 18 18M18 2 2 18" stroke="#8e9093" strokeWidth="4" strokeLinecap="round" />
              </svg>
            </button>
          </DocActions>
        </DocTab>
        <NewTab aria-label="New document">
          <svg width="24" height="24" viewBox="0 0 24 24" aria-hidden="true">
            <path d="M12 2V22M2 12H22" stroke="#8e9093" strokeWidth="4" strokeLinecap="round" />
          </svg>
        </NewTab>
      </TabStrip>

      <Workspace>
        <Model />
        <Ribbon>
          <ModeSwitch>
            <Grip />
            <ModeButton>MODEL <Caret color="#ffffff" /></ModeButton>
          </ModeSwitch>
          {ribbonGroups.map((group) => (
            <Group key={group.name} $width={group.width}>
              <Tools>
                {group.tools.map(([label, Icon]) => (
                  <Tool key={label} aria-label={label} $active={group.active}>
                    <Icon />
                  </Tool>
                ))}
              </Tools>
              <GroupMenu>{group.name} <Caret /></GroupMenu>
            </Group>
          ))}
        </Ribbon>

        <Panel $top>
          <PanelHead>
            <Collapse as="button" aria-label="Collapse browser"><RewindIcon /></Collapse>
            <PanelTitle>BROWSER</PanelTitle>
            <button aria-label="Minimize browser"><RoundIcon /></button>
            <PanelGrip />
          </PanelHead>
          <Tree>
            {treeItems.map((item) => (
              <TreeItem key={item.id} item={item} lit={lights[item.id]} onToggleLight={() => toggle(item.id)} />
            ))}
          </Tree>
        </Panel>

        <Dock>
          <Panel>
            <PanelHead>
              <Collapse />
              <PanelTitle>COMMENTS</PanelTitle>
              <button aria-label="Expand comments"><RoundIcon plus /></button>
              <PanelGrip />
            </PanelHead>
          </Panel>
          <NavBar $before={586} $gap={20}>
            <NavItem $gap={10} $pull={-14}>
              <button aria-label="Orbit"><OrbitIcon /></button>
              <button aria-label="Orbit options"><Caret /></button>
            </NavItem>
            <button aria-label="Look at"><LookIcon /></button>
            <button aria-label="Pan"><HandIcon /></button>
            <button aria-label="Zoom"><ZoomIcon /></button>
            <NavItem $gap={10}>
              <button aria-label="Zoom window"><ZoomWindowIcon /></button>
              <button aria-label="Zoom options"><Caret /></button>
            </NavItem>
          </NavBar>
          <NavBar $before={14} $gap={8}>
            <NavItem $gap={4}>
              <button aria-label="Display settings"><DisplayIcon /></button>
              <button aria-label="Display options"><Caret /></button>
            </NavItem>
            <NavItem $gap={4}>
              <button aria-label="Grid and snaps"><GridIcon /></button>
              <button aria-label="Grid options"><Caret /></button>
            </NavItem>
            <NavItem $gap={4}>
              <button aria-label="Viewports"><ViewsIcon /></button>
              <button aria-label="Viewport options"><Caret /></button>
            </NavItem>
          </NavBar>
        </Dock>
      </Workspace>

      <Timeline>
        <TimelineHandle />
      </Timeline>
    </Page>
  );
}
